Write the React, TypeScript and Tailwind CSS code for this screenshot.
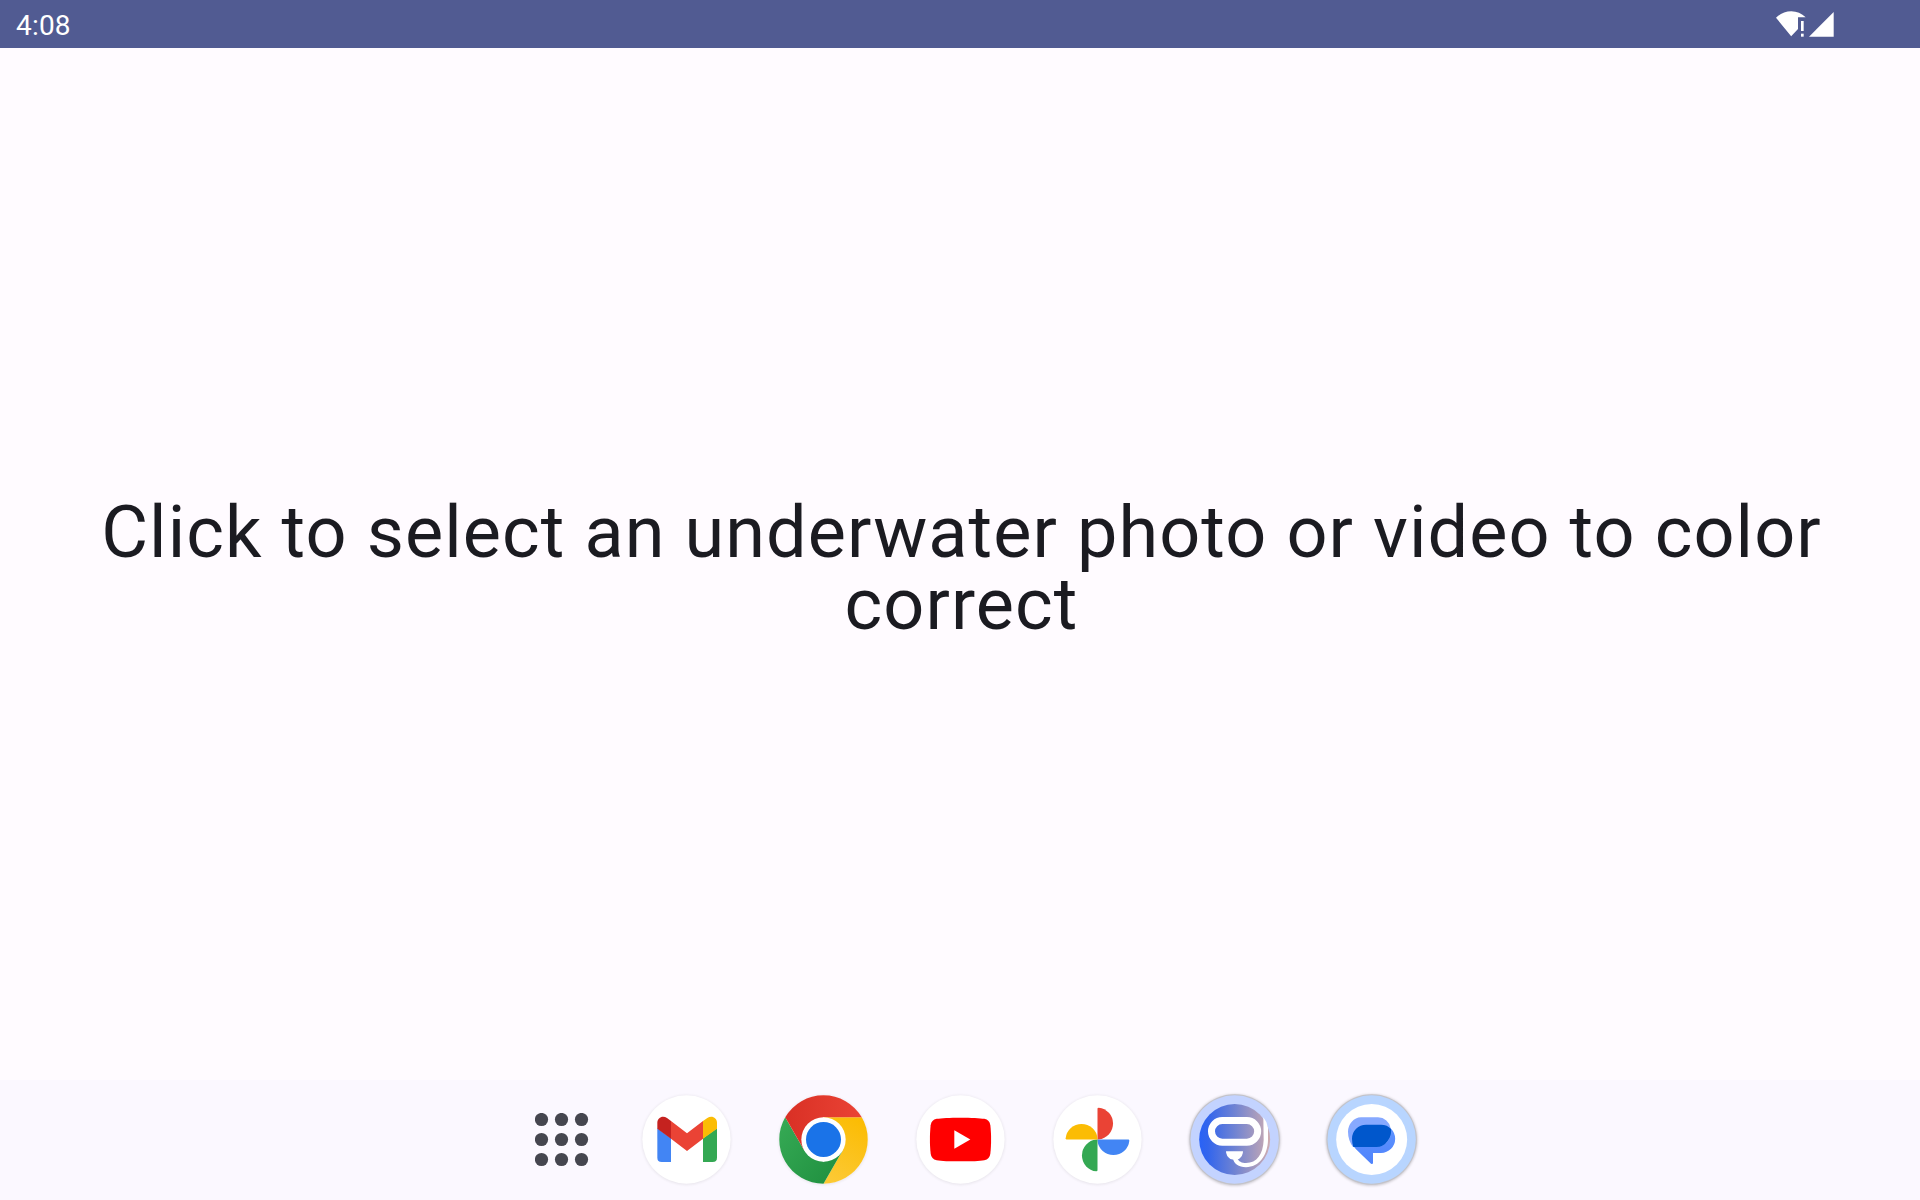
import type { ReactNode } from 'react';

function StatusIcons() {
  return (
    <svg width="90" height="48" viewBox="0 0 270 144" className="mr-[70px]" aria-hidden="true">
      <path d="M48 53C60 41 76 33.500 94 33.500C110 33.500 125 40 137 51.500H114V87L93.500 109Z" fill="#fff" />
      <rect x="123" y="63" width="8" height="30" fill="#fff" />
      <rect x="123" y="101" width="8" height="9" fill="#fff" />
      <path d="M221 36V110H147Z" fill="#fff" />
    </svg>
  );
}

function AllAppsIcon() {
  const spots = [4.5, 24.5, 44.5];
  return (
    <svg width="54" height="54" viewBox="-2 -2 54 54" fill="#45464f" aria-hidden="true">
      {spots.map((y) => spots.map((x) => <circle key={`${x}-${y}`} cx={x} cy={y} r="6.6" />))}
    </svg>
  );
}

function AppIcon({ children, label }: { children: ReactNode; label: string }) {
  return (
    <svg width="115" height="110" viewBox="0 0 345 330" role="img" aria-label={label} className="shrink-0">
      {children}
    </svg>
  );
}

function Disc({ cx = 172.5, fill = '#fff' }: { cx?: number; fill?: string }) {
  return (
    <>
      <circle cx={cx} cy="165" r="134" fill="#000" opacity=".08" filter="url(#soft)" />
      <circle cx={cx} cy="163.500" r="132.500" fill={fill} />
    </>
  );
}

function RimmedDisc({ fill }: { fill: string }) {
  return (
    <>
      <circle cx="173" cy="165" r="136" fill="#000" opacity=".25" filter="url(#soft)" />
      <circle cx="173" cy="163.500" r="135.500" fill="#c3c3c9" />
      <circle cx="173" cy="163.500" r="132.500" fill={fill} />
    </>
  );
}

function Gmail() {
  return (
    <AppIcon label="Gmail">
      <Disc cx={169.5} />
      <path d="M82 130L123 160V231H95Q82 231 82 218Z" fill="#4285f4" />
      <path d="M219 160L261 130V218Q261 231 248 231H219Z" fill="#34a853" />
      <path d="M123 108L171 145L219 108V161L171 198L123 161Z" fill="#ea4335" />
      <path d="M123 108V161L82 131V113C82 98 98 90 111 99Z" fill="#c5221f" />
      <path d="M219 108V161L261 131V113C261 98 245 90 232 99Z" fill="#fbbc04" />
    </AppIcon>
  );
}

function Chrome() {
  return (
    <AppIcon label="Chrome">
      <defs>
        <linearGradient id="cr" x1="0" y1="0" x2="1" y2="0">
          <stop offset="0" stopColor="#d93025" />
          <stop offset="1" stopColor="#ea4335" />
        </linearGradient>
        <linearGradient id="cy" x1=".7" y1="0" x2=".3" y2="1">
          <stop offset="0" stopColor="#fbbc04" />
          <stop offset="1" stopColor="#fcc934" />
        </linearGradient>
        <linearGradient id="cg" x1="0" y1=".2" x2="1" y2="1">
          <stop offset="0" stopColor="#34a853" />
          <stop offset="1" stopColor="#1e8e3e" />
        </linearGradient>
      </defs>
      <Disc />
      <path d="M287.300 97A132.500 132.500 0 0 1 172.500 296L229.900 196.600L172.500 97Z" fill="url(#cy)" />
      <path d="M172.500 296A132.500 132.500 0 0 1 57.700 97L115 196.600L172.500 230L229.900 196.600Z" fill="url(#cg)" />
      <path d="M57.700 97A132.500 132.500 0 0 1 287.300 97H172.500L115 196.600Z" fill="url(#cr)" />
      <circle cx="172.500" cy="163.500" r="66.500" fill="#fff" />
      <circle cx="172.500" cy="163.500" r="52.500" fill="#1a73e8" />
    </AppIcon>
  );
}

function YouTube() {
  return (
    <AppIcon label="YouTube">
      <Disc />
      <path
        d="M172.500 98C205 98 230 99 244 101.500Q260 105 262 121C265 146 265 181 262 206Q260 222 244 225.500C230 228 205 229 172.500 229C140 229 115 228 101 225.500Q85 222 83 206C80 181 80 146 83 121Q85 105 101 101.500C115 99 140 98 172.500 98Z"
        fill="#f00"
      />
      <path d="M154 136L202 163.500L154 191Z" fill="#fff" />
    </AppIcon>
  );
}

function Photos() {
  return (
    <AppIcon label="Photos">
      <Disc />
      <path d="M172.500 71Q172.500 68 176 68A48 48 0 0 1 176 163.500H172.500Z" fill="#ea4335" />
      <path d="M265 163.500Q268 163.500 268 167A48 48 0 0 1 172.500 167V163.500Z" fill="#4285f4" />
      <path d="M172.500 256Q172.500 259 169 259A48 48 0 0 1 169 163.500H172.500Z" fill="#34a853" />
      <path d="M80 163.500Q77 163.500 77 160A48 48 0 0 1 172.500 160V163.500Z" fill="#fbbc04" />
    </AppIcon>
  );
}

function DiveMask() {
  return (
    <AppIcon label="Color correction">
      <defs>
        <linearGradient id="sea" x1="0" y1="0" x2="1" y2="0">
          <stop offset="0" stopColor="#2962f6" />
          <stop offset=".12" stopColor="#3265ed" />
          <stop offset=".5" stopColor="#6f83d3" />
          <stop offset=".85" stopColor="#b09fbb" />
          <stop offset="1" stopColor="#d0adb0" />
        </linearGradient>
      </defs>
      <RimmedDisc fill="#c3d3ff" />
      <circle cx="173" cy="163.500" r="106.500" fill="url(#sea)" />
      <rect x="103.500" y="106.500" width="138.500" height="65" rx="32.500" fill="none" stroke="#fff" strokeWidth="21" />
      <path d="M147 199H198Q198 213 186 222Q173 226 160 222Q147 213 147 199Z" fill="#fff" />
      <path
        d="M259 97Q270 110 273 128V165C272 210 247 246.500 207 246.500C185 246.500 170 237 168 220L181 219C184 230 195 234 207 234C240 234 258 208 260 165Z"
        fill="#fff"
      />
    </AppIcon>
  );
}

function Messages() {
  return (
    <AppIcon label="Messages">
      <defs>
        <linearGradient id="msg" x1="0" y1="0" x2="0" y2="1">
          <stop offset="0" stopColor="#5f94ff" />
          <stop offset="1" stopColor="#4f83fc" />
        </linearGradient>
      </defs>
      <RimmedDisc fill="#b8d5ff" />
      <circle cx="173" cy="163.500" r="106.500" fill="#fff" />
      <path
        d="M156 119H201A42.500 42.500 0 0 1 201 204H177V234Q176 239 171 236L126 193Q114 180 114 161A42 42 0 0 1 156 119Z"
        fill="url(#msg)"
      />
      <path d="M141 97H192A39 39 0 0 1 230 130Q236 150 222 168Q210 185 188 186H117Q102 165 102 140A40 43 0 0 1 141 97Z" fill="#87a9ff" />
      <path d="M114 161A42 42 0 0 1 156 119H201Q220 119 231 132Q234 152 221 168Q208 186 188 186H118Q114 174 114 161Z" fill="#0057cc" />
    </AppIcon>
  );
}

export default function App() {
  return (
    <div className="flex h-[1200px] w-[1920px] flex-col overflow-hidden bg-[#fffbff] font-['Roboto',sans-serif]">
      <svg width="0" height="0" className="absolute" aria-hidden="true">
        <filter id="soft" x="-20%" y="-20%" width="140%" height="140%">
          <feGaussianBlur stdDeviation="4" />
        </filter>
      </svg>
      <header className="flex h-12 shrink-0 items-center justify-between bg-[#515b92]">
        <span className="pl-4 pt-1 text-[28px] leading-8 tracking-[0.2px] text-white">4:08</span>
        <StatusIcons />
      </header>
      <main className="flex flex-1 items-center justify-center pl-[3px] pt-2.5">
        <h1 className="w-[1760px] text-center text-[72px] font-normal leading-[72px] tracking-[1.09px] text-[#1b1b21]">
          Click to select an underwater photo or video to color correct
        </h1>
      </main>
      <footer className="flex h-[120px] shrink-0 items-center bg-[#fbf8ff] pl-[534.5px]">
        <AllAppsIcon />
        <div className="ml-[41.5px] flex gap-[21px]">
          <Gmail />
          <div className="flex gap-[22px]">
            <Chrome />
            <YouTube />
            <Photos />
            <DiveMask />
            <Messages />
          </div>
        </div>
      </footer>
    </div>
  );
}
